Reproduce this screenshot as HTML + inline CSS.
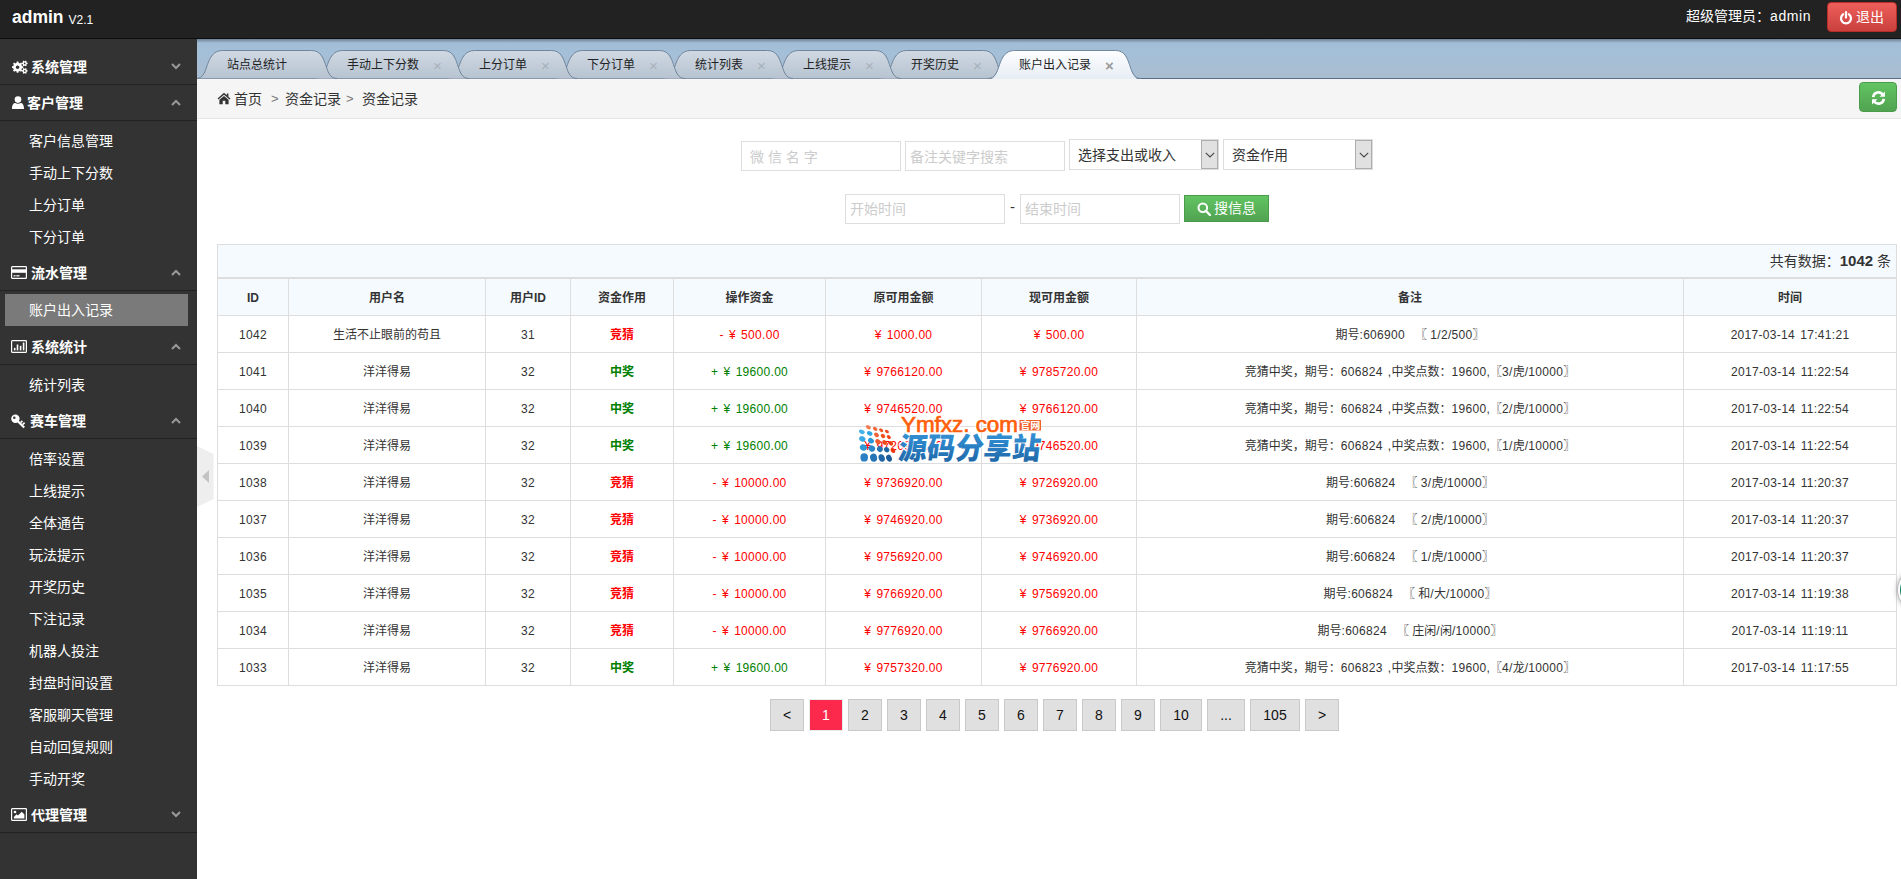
<!DOCTYPE html>
<html lang="zh-CN"><head><meta charset="utf-8"><title>admin V2.1</title><style>
*{box-sizing:border-box;margin:0;padding:0}
html,body{width:1901px;height:879px;overflow:hidden;background:#fff}
body{font-family:"Liberation Sans", "Noto Sans CJK SC", sans-serif;font-size:14px;color:#333;position:relative}
.abs{position:absolute}
#hd{position:absolute;left:0;top:0;width:1901px;height:39px;background:#222;border-bottom:1px solid #0d0d0d}
#logo{position:absolute;left:12px;top:5px;color:#fff;font-weight:bold;font-size:17.5px;line-height:24px;white-space:nowrap}
#logo span{font-weight:normal;font-size:12px;margin-left:5px;position:relative;top:1px}
#user{position:absolute;left:1686px;top:5px;color:#fff;font-size:14px;line-height:22px;white-space:nowrap}
#logout{position:absolute;left:1827px;top:2px;width:70px;height:30px;border-radius:4px;border:1px solid #b92c28;background:linear-gradient(#ee5f5b,#c9403c);color:#fff;font-size:14px;line-height:28px;white-space:nowrap}
#logout svg{position:absolute;left:11px;top:8px}
#logout span{position:absolute;left:28px;top:0}
#side{position:absolute;left:0;top:39px;width:197px;height:840px;background:#333}
.gh{position:absolute;left:0;width:197px;height:36px;border-bottom:1px solid #222;color:#fff;font-weight:bold;font-size:14px;line-height:35px;white-space:nowrap}
.gh .t{position:absolute;top:1px}
.gh svg.ic{position:absolute;left:12px;top:11px}
.gh svg.ic2{position:absolute;left:11px;top:11px}
.gh svg.ch{position:absolute;left:171px;top:14px}
.it{position:absolute;left:29px;height:32px;line-height:32px;color:#fff;font-size:14px;white-space:nowrap}
#act{position:absolute;left:5px;top:255px;width:183px;height:32px;background:#7a7a7a}
#tabs{position:absolute;left:197px;top:39px;width:1704px;height:40px;background:linear-gradient(#6f8193 0,#a2bed7 4px,#a4bfd8 14px,#aabdd0 39px)}
#tabs svg{position:absolute;left:0;top:0}
.tt{position:absolute;top:17px;height:18px;line-height:18px;font-size:12px;color:#222;white-space:nowrap}
.tx{position:absolute;top:18px;height:18px;line-height:18px;font-size:15px;color:#aaa;font-weight:bold}
#bc{position:absolute;left:197px;top:79px;width:1704px;height:40px;background:#f5f5f5;border-bottom:1px solid #e5e5e5;font-size:14px;color:#333;line-height:40px;white-space:nowrap}
#bc span{position:absolute;top:0}
#bc svg{position:absolute;left:20px;top:13px}
#refresh{position:absolute;left:1859px;top:82px;width:38px;height:30px;border-radius:4px;border:1px solid #4a9c4a;background:linear-gradient(#62c462,#51a351)}
#refresh svg{position:absolute;left:11px;top:8px}
.inp{position:absolute;height:30px;border:1px solid #ddd;background:#fff;font-size:14px;color:#ccc;line-height:28px;padding-left:6px;white-space:nowrap;overflow:hidden}
.sel{position:absolute;height:31px;border:1px solid #ddd;background:#fff;font-size:14px;color:#333;line-height:30px;padding-left:8px;white-space:nowrap}
.sel i{position:absolute;right:0;top:0;width:17px;height:29px;background:#e1e1e1;border:1px solid #adadad;display:block}
.sel i svg{position:absolute;left:2.5px;top:11px}
#sbtn{position:absolute;left:1184px;top:195px;width:85px;height:27px;border:1px solid #4a9c4a;background:linear-gradient(#62c462,#51a351);color:#fff;font-size:14px;line-height:25px;white-space:nowrap}
#sbtn svg{position:absolute;left:12px;top:6px}
#sbtn span{position:absolute;left:29px;top:0}
#cap{position:absolute;left:217px;top:244px;width:1680px;height:35px;border:1px solid #ddd;border-bottom:none;background:#f5fafe;font-size:14px;line-height:31px;text-align:right;padding-right:5px;color:#333;white-space:nowrap}
#cap b{font-size:15px}
#tb{position:absolute;left:217px;top:277px;width:1679px;border-collapse:collapse;table-layout:fixed;font-size:12px;color:#333}
#tb td,#tb th{border:1px solid #ddd;height:37px;line-height:16px;text-align:center;padding:2px 0 0;white-space:nowrap;overflow:hidden}
#tb th{background:#f5fafe;font-weight:bold;height:36px;border-top:2px solid #ddd}
.n{letter-spacing:.3px;word-spacing:1.6px}
#tb tr.h{height:37px}
.r{color:#f00}.g{color:#008000}
#pg a{position:absolute;top:699px;height:32px;border:1px solid #c9c9c9;background:#e0e0e0;color:#111;font-family:"Liberation Sans",sans-serif;font-size:14px;line-height:30px;text-align:center;display:block}
#pg a.on{background:#fd294d;border-color:#e4ecec;color:#fff}
#handle{position:absolute;left:197px;top:446px}
#ball{position:absolute;left:1897px;top:568px;width:44px;height:44px;border-radius:22px;border:1px solid #bdbdbd;background:#fff;box-shadow:0 0 5px rgba(0,0,0,.3)}
#ball i{position:absolute;left:2px;top:2px;width:38px;height:38px;border-radius:19px;background:#0b7d58;display:block}
#wm{position:absolute;left:859px;top:414px;width:185px;height:50px}
</style></head><body>
<div id="hd"><div id="logo">admin<span>V2.1</span></div><div id="user">超级管理员：<span style="letter-spacing:.6px">admin</span></div>
<div id="logout"><svg width="14" height="14" viewBox="0 0 14 14"><path d="M4 3.3 A5 5 0 1 0 10 3.3" fill="none" stroke="#fff" stroke-width="2.3" stroke-linecap="round"/><path d="M7 1.2 V6.6" stroke="#fff" stroke-width="2.3" stroke-linecap="round"/></svg><span>退出</span></div></div>
<div id="side"><div class="gh" style="top:10px"><svg class="ic" width="16" height="14" viewBox="0 0 16 14"><path d="M9.99 6.22 L11.23 6.31 L11.23 8.09 L9.99 8.18 L9.40 9.61 L10.21 10.55 L8.95 11.81 L8.01 11.00 L6.58 11.59 L6.49 12.83 L4.71 12.83 L4.62 11.59 L3.19 11.00 L2.25 11.81 L0.99 10.55 L1.80 9.61 L1.21 8.18 L-0.03 8.09 L-0.03 6.31 L1.21 6.22 L1.80 4.79 L0.99 3.85 L2.25 2.59 L3.19 3.40 L4.62 2.81 L4.71 1.57 L6.49 1.57 L6.58 2.81 L8.01 3.40 L8.95 2.59 L10.21 3.85 L9.40 4.79 Z M3.80 7.20 a1.80 1.80 0 1 0 3.60 0 a1.80 1.80 0 1 0 -3.60 0 Z" fill="#fff" fill-rule="evenodd"/><path d="M14.90 2.74 L15.63 2.78 L15.63 4.02 L14.90 4.06 L14.38 4.97 L14.71 5.63 L13.63 6.25 L13.23 5.64 L12.17 5.64 L11.77 6.25 L10.69 5.63 L11.02 4.97 L10.50 4.06 L9.77 4.02 L9.77 2.78 L10.50 2.74 L11.02 1.83 L10.69 1.17 L11.77 0.55 L12.17 1.16 L13.23 1.16 L13.63 0.55 L14.71 1.17 L14.38 1.83 Z M11.85 3.40 a0.85 0.85 0 1 0 1.70 0 a0.85 0.85 0 1 0 -1.70 0 Z" fill="#fff" fill-rule="evenodd"/><path d="M14.90 10.24 L15.63 10.28 L15.63 11.52 L14.90 11.56 L14.38 12.47 L14.71 13.13 L13.63 13.75 L13.23 13.14 L12.17 13.14 L11.77 13.75 L10.69 13.13 L11.02 12.47 L10.50 11.56 L9.77 11.52 L9.77 10.28 L10.50 10.24 L11.02 9.33 L10.69 8.67 L11.77 8.05 L12.17 8.66 L13.23 8.66 L13.63 8.05 L14.71 8.67 L14.38 9.33 Z M11.85 10.90 a0.85 0.85 0 1 0 1.70 0 a0.85 0.85 0 1 0 -1.70 0 Z" fill="#fff" fill-rule="evenodd"/></svg><span class="t" style="left:31px">系统管理</span><svg class="ch" width="10" height="7" viewBox="0 0 10 7"><path d="M1 1 L5 5 L9 1" fill="none" stroke="#999" stroke-width="2"/></svg></div><div class="gh" style="top:46px"><svg class="ic" width="12" height="14" viewBox="0 0 12 14"><circle cx="6" cy="3.6" r="3.3" fill="#fff"/><path d="M0 13 C0 8 2 7 3.2 7 C4.5 8 7.5 8 8.8 7 C10 7 12 8 12 13 Z" fill="#fff"/></svg><span class="t" style="left:27px">客户管理</span><svg class="ch" width="10" height="7" viewBox="0 0 10 7"><path d="M1 6 L5 2 L9 6" fill="none" stroke="#999" stroke-width="2"/></svg></div><div class="it" style="top:86px">客户信息管理</div><div class="it" style="top:118px">手动上下分数</div><div class="it" style="top:150px">上分订单</div><div class="it" style="top:182px">下分订单</div><div class="gh" style="top:216px"><svg class="ic2" width="16" height="14" viewBox="0 0 16 14"><rect x=".6" y=".6" width="14.8" height="11.8" rx=".7" fill="none" stroke="#fff" stroke-width="1.2"/><rect x=".6" y="3.3" width="14.8" height="3.5" fill="#fff"/><rect x="2.6" y="9.2" width="2" height="1.2" fill="#fff"/><rect x="5.3" y="9.2" width="3.2" height="1.2" fill="#fff"/></svg><span class="t" style="left:31px">流水管理</span><svg class="ch" width="10" height="7" viewBox="0 0 10 7"><path d="M1 6 L5 2 L9 6" fill="none" stroke="#999" stroke-width="2"/></svg></div><div id="act"></div><div class="it" style="top:255px">账户出入记录</div><div class="gh" style="top:290px"><svg class="ic2" width="16" height="14" viewBox="0 0 16 14"><rect x=".6" y=".6" width="14.8" height="11.8" rx=".7" fill="none" stroke="#fff" stroke-width="1.2"/><rect x="2.9" y="7.9" width="1.6" height="2.5" fill="#fff"/><rect x="5.7" y="4.5" width="1.6" height="5.9" fill="#fff"/><rect x="8.8" y="5.8" width="1.6" height="4.6" fill="#fff"/><rect x="11.8" y="2.5" width="1.6" height="7.9" fill="#fff"/></svg><span class="t" style="left:31px">系统统计</span><svg class="ch" width="10" height="7" viewBox="0 0 10 7"><path d="M1 6 L5 2 L9 6" fill="none" stroke="#999" stroke-width="2"/></svg></div><div class="it" style="top:330px">统计列表</div><div class="gh" style="top:364px"><svg class="ic2" width="16" height="15" viewBox="0 0 16 15"><path d="M4.4 .6 a4.2 4.2 0 1 0 0 8.4 a4.2 4.2 0 1 0 0 -8.4 Z M3.3 2.6 a1.25 1.25 0 1 1 0 2.5 a1.25 1.25 0 1 1 0 -2.5 Z" fill="#fff" fill-rule="evenodd"/><path d="M6.8 7.2 L13.2 13.6" stroke="#fff" stroke-width="2.1" fill="none"/><path d="M9.6 8.6 L11.4 6.9 M11.6 10.6 L13.6 8.7" stroke="#fff" stroke-width="1.6" fill="none"/></svg><span class="t" style="left:30px">赛车管理</span><svg class="ch" width="10" height="7" viewBox="0 0 10 7"><path d="M1 6 L5 2 L9 6" fill="none" stroke="#999" stroke-width="2"/></svg></div><div class="it" style="top:404px">倍率设置</div><div class="it" style="top:436px">上线提示</div><div class="it" style="top:468px">全体通告</div><div class="it" style="top:500px">玩法提示</div><div class="it" style="top:532px">开奖历史</div><div class="it" style="top:564px">下注记录</div><div class="it" style="top:596px">机器人投注</div><div class="it" style="top:628px">封盘时间设置</div><div class="it" style="top:660px">客服聊天管理</div><div class="it" style="top:692px">自动回复规则</div><div class="it" style="top:724px">手动开奖</div><div class="gh" style="top:758px"><svg class="ic2" width="16" height="14" viewBox="0 0 16 14"><rect x=".6" y=".6" width="14.8" height="11.8" rx=".7" fill="none" stroke="#fff" stroke-width="1.2"/><circle cx="4" cy="4" r="1.35" fill="#fff"/><path d="M2.9 10.4 V9 L5.5 6.3 L6.9 7.6 L10.8 3.7 L13.4 6.6 V10.4 Z" fill="#fff"/></svg><span class="t" style="left:31px">代理管理</span><svg class="ch" width="10" height="7" viewBox="0 0 10 7"><path d="M1 1 L5 5 L9 1" fill="none" stroke="#999" stroke-width="2"/></svg></div></div>
<div id="tabs"><svg width="1704" height="40" viewBox="0 0 1704 40"><defs><linearGradient id="ti" x1="0" y1="0" x2="0" y2="1"><stop offset="0" stop-color="#d0d9e3"/><stop offset="1" stop-color="#b7c3d1"/></linearGradient><linearGradient id="ta" x1="0" y1="0" x2="0" y2="1"><stop offset="0" stop-color="#fdfeff"/><stop offset="1" stop-color="#e6edf5"/></linearGradient></defs><rect x="0" y="39" width="1704" height="1" fill="#586e88"/><path d="M683 39.5 C690.5 39.5 692 32.5 694.5 25.5 C697 18.5 700.5 11.5 709.5 11.5 L786.5 11.5 C795.5 11.5 798 18.5 800.5 25.5 C803 32.5 804.5 39.5 812 39.5" fill="url(#ti)" stroke="#71869c" stroke-width="1"/><path d="M575 39.5 C582.5 39.5 584 32.5 586.5 25.5 C589 18.5 592.5 11.5 601.5 11.5 L678.5 11.5 C687.5 11.5 690 18.5 692.5 25.5 C695 32.5 696.5 39.5 704 39.5" fill="url(#ti)" stroke="#71869c" stroke-width="1"/><path d="M467 39.5 C474.5 39.5 476 32.5 478.5 25.5 C481 18.5 484.5 11.5 493.5 11.5 L570.5 11.5 C579.5 11.5 582 18.5 584.5 25.5 C587 32.5 588.5 39.5 596 39.5" fill="url(#ti)" stroke="#71869c" stroke-width="1"/><path d="M359 39.5 C366.5 39.5 368 32.5 370.5 25.5 C373 18.5 376.5 11.5 385.5 11.5 L462.5 11.5 C471.5 11.5 474 18.5 476.5 25.5 C479 32.5 480.5 39.5 488 39.5" fill="url(#ti)" stroke="#71869c" stroke-width="1"/><path d="M251 39.5 C258.5 39.5 260 32.5 262.5 25.5 C265 18.5 268.5 11.5 277.5 11.5 L354.5 11.5 C363.5 11.5 366 18.5 368.5 25.5 C371 32.5 372.5 39.5 380 39.5" fill="url(#ti)" stroke="#71869c" stroke-width="1"/><path d="M119 39.5 C126.5 39.5 128 32.5 130.5 25.5 C133 18.5 136.5 11.5 145.5 11.5 L246.5 11.5 C255.5 11.5 258 18.5 260.5 25.5 C263 32.5 264.5 39.5 272 39.5" fill="url(#ti)" stroke="#71869c" stroke-width="1"/><path d="M-1 39.5 C6.5 39.5 8 32.5 10.5 25.5 C13 18.5 16.5 11.5 25.5 11.5 L114.5 11.5 C123.5 11.5 126 18.5 128.5 25.5 C131 32.5 132.5 39.5 140 39.5" fill="url(#ti)" stroke="#71869c" stroke-width="1"/><path d="M791 40.5 C798.5 40.5 800 33.5 802.5 26.5 C805 18.5 808.5 11.5 817.5 11.5 L918.5 11.5 C927.5 11.5 930 18.5 932.5 26.5 C935 33.5 936.5 40.5 944 40.5 Z" fill="url(#ta)" stroke="none"/><path d="M791 39.5 C798.5 39.5 800 32.5 802.5 25.5 C805 18.5 808.5 11.5 817.5 11.5 L918.5 11.5 C927.5 11.5 930 18.5 932.5 25.5 C935 32.5 936.5 39.5 944 39.5" fill="none" stroke="#73889f" stroke-width="1"/></svg><span class="tt" style="left:30px">站点总统计</span><span class="tt" style="left:150px">手动上下分数</span><span class="tx" style="left:236px;color:#a7b0bb;font-weight:normal">×</span><span class="tt" style="left:282px">上分订单</span><span class="tx" style="left:344px;color:#a7b0bb;font-weight:normal">×</span><span class="tt" style="left:390px">下分订单</span><span class="tx" style="left:452px;color:#a7b0bb;font-weight:normal">×</span><span class="tt" style="left:498px">统计列表</span><span class="tx" style="left:560px;color:#a7b0bb;font-weight:normal">×</span><span class="tt" style="left:606px">上线提示</span><span class="tx" style="left:668px;color:#a7b0bb;font-weight:normal">×</span><span class="tt" style="left:714px">开奖历史</span><span class="tx" style="left:776px;color:#a7b0bb;font-weight:normal">×</span><span class="tt" style="left:822px">账户出入记录</span><span class="tx" style="left:908px;color:#9a9a9a;font-weight:bold">×</span></div>
<div id="bc"><svg width="14" height="13" viewBox="0 0 14 13"><path d="M7 .8 L.5 6.6 L1.4 7.6 L7 2.8 L12.6 7.6 L13.5 6.6 L11.4 4.7 V1.6 H9.8 V3.3 Z" fill="#333"/><path d="M2.4 7.8 L7 3.9 L11.6 7.8 V12.2 H8.3 V8.8 H5.7 V12.2 H2.4 Z" fill="#333"/></svg><span style="left:37px">首页</span><span style="left:74px;color:#777;font-size:13px">&gt;</span><span style="left:88px">资金记录</span><span style="left:149px;color:#777;font-size:13px">&gt;</span><span style="left:165px">资金记录</span></div>
<div id="refresh"><svg width="15" height="14" viewBox="0 0 15 14"><path d="M2.2 6.2 A5.3 5.3 0 0 1 11.8 3.6" fill="none" stroke="#fff" stroke-width="2.6"/><path d="M14 .4 V5.8 H8.6 Z" fill="#fff"/><path d="M12.8 7.8 A5.3 5.3 0 0 1 3.2 10.4" fill="none" stroke="#fff" stroke-width="2.6"/><path d="M1 13.6 V8.2 H6.4 Z" fill="#fff"/></svg></div>
<div class="inp" style="left:741px;top:141px;width:160px;padding-left:8px;line-height:30px">微 信 名 字</div>
<div class="inp" style="left:905px;top:141px;width:160px;padding-left:4px;line-height:30px">备注关键字搜索</div>
<div class="sel" style="left:1069px;top:139px;width:150px">选择支出或收入<i><svg width="10" height="6" viewBox="0 0 10 6"><path d="M.8 .9 L5 4.9 L9.2 .9" fill="none" stroke="#444" stroke-width="1.1"/></svg></i></div>
<div class="sel" style="left:1223px;top:139px;width:150px">资金作用<i><svg width="10" height="6" viewBox="0 0 10 6"><path d="M.8 .9 L5 4.9 L9.2 .9" fill="none" stroke="#444" stroke-width="1.1"/></svg></i></div>
<div class="inp" style="left:845px;top:194px;width:160px;padding-left:4px">开始时间</div>
<div class="abs" style="left:1010px;top:197px;font-size:15px;color:#333;line-height:20px">-</div>
<div class="inp" style="left:1020px;top:194px;width:160px;padding-left:4px">结束时间</div>
<div id="sbtn"><svg width="14" height="14" viewBox="0 0 14 14"><circle cx="5.8" cy="5.8" r="4.3" fill="none" stroke="#fff" stroke-width="2"/><path d="M9 9 L13 13" stroke="#fff" stroke-width="2.4" stroke-linecap="round"/></svg><span>搜信息</span></div>
<div id="cap">共有数据：<b>1042</b> 条</div>
<table id="tb"><colgroup><col style="width:71px"><col style="width:197px"><col style="width:85px"><col style="width:103px"><col style="width:152px"><col style="width:156px"><col style="width:155px"><col style="width:547px"><col style="width:213px"></colgroup><tr class="h"><th>ID</th><th>用户名</th><th>用户ID</th><th>资金作用</th><th>操作资金</th><th>原可用金额</th><th>现可用金额</th><th>备注</th><th>时间</th></tr><tr><td><span class="n">1042</span></td><td>生活不止眼前的苟且</td><td><span class="n">31</span></td><td class="r"><b>竞猜</b></td><td class="r"><span class="n">- ¥ 500.00</span></td><td class="r"><span class="n">¥ 1000.00</span></td><td class="r"><span class="n">¥ 500.00</span></td><td>期号<span class="n">:606900</span>   〖 <span class="n">1/2/500</span>〗</td><td><span class="n">2017-03-14 17:41:21</span></td></tr><tr><td><span class="n">1041</span></td><td>洋洋得易</td><td><span class="n">32</span></td><td class="g"><b>中奖</b></td><td class="g"><span class="n">+ ¥ 19600.00</span></td><td class="r"><span class="n">¥ 9766120.00</span></td><td class="r"><span class="n">¥ 9785720.00</span></td><td>竞猜中奖，期号：<span class="n">606824 ,</span>中奖点数：<span class="n">19600,</span>〖<span class="n">3/</span>虎<span class="n">/10000</span>〗</td><td><span class="n">2017-03-14 11:22:54</span></td></tr><tr><td><span class="n">1040</span></td><td>洋洋得易</td><td><span class="n">32</span></td><td class="g"><b>中奖</b></td><td class="g"><span class="n">+ ¥ 19600.00</span></td><td class="r"><span class="n">¥ 9746520.00</span></td><td class="r"><span class="n">¥ 9766120.00</span></td><td>竞猜中奖，期号：<span class="n">606824 ,</span>中奖点数：<span class="n">19600,</span>〖<span class="n">2/</span>虎<span class="n">/10000</span>〗</td><td><span class="n">2017-03-14 11:22:54</span></td></tr><tr><td><span class="n">1039</span></td><td>洋洋得易</td><td><span class="n">32</span></td><td class="g"><b>中奖</b></td><td class="g"><span class="n">+ ¥ 19600.00</span></td><td class="r"><span class="n">¥ 9726920.00</span></td><td class="r"><span class="n">¥ 9746520.00</span></td><td>竞猜中奖，期号：<span class="n">606824 ,</span>中奖点数：<span class="n">19600,</span>〖<span class="n">1/</span>虎<span class="n">/10000</span>〗</td><td><span class="n">2017-03-14 11:22:54</span></td></tr><tr><td><span class="n">1038</span></td><td>洋洋得易</td><td><span class="n">32</span></td><td class="r"><b>竞猜</b></td><td class="r"><span class="n">- ¥ 10000.00</span></td><td class="r"><span class="n">¥ 9736920.00</span></td><td class="r"><span class="n">¥ 9726920.00</span></td><td>期号<span class="n">:606824</span>   〖 <span class="n">3/</span>虎<span class="n">/10000</span>〗</td><td><span class="n">2017-03-14 11:20:37</span></td></tr><tr><td><span class="n">1037</span></td><td>洋洋得易</td><td><span class="n">32</span></td><td class="r"><b>竞猜</b></td><td class="r"><span class="n">- ¥ 10000.00</span></td><td class="r"><span class="n">¥ 9746920.00</span></td><td class="r"><span class="n">¥ 9736920.00</span></td><td>期号<span class="n">:606824</span>   〖 <span class="n">2/</span>虎<span class="n">/10000</span>〗</td><td><span class="n">2017-03-14 11:20:37</span></td></tr><tr><td><span class="n">1036</span></td><td>洋洋得易</td><td><span class="n">32</span></td><td class="r"><b>竞猜</b></td><td class="r"><span class="n">- ¥ 10000.00</span></td><td class="r"><span class="n">¥ 9756920.00</span></td><td class="r"><span class="n">¥ 9746920.00</span></td><td>期号<span class="n">:606824</span>   〖 <span class="n">1/</span>虎<span class="n">/10000</span>〗</td><td><span class="n">2017-03-14 11:20:37</span></td></tr><tr><td><span class="n">1035</span></td><td>洋洋得易</td><td><span class="n">32</span></td><td class="r"><b>竞猜</b></td><td class="r"><span class="n">- ¥ 10000.00</span></td><td class="r"><span class="n">¥ 9766920.00</span></td><td class="r"><span class="n">¥ 9756920.00</span></td><td>期号<span class="n">:606824</span>   〖 和<span class="n">/</span>大<span class="n">/10000</span>〗</td><td><span class="n">2017-03-14 11:19:38</span></td></tr><tr><td><span class="n">1034</span></td><td>洋洋得易</td><td><span class="n">32</span></td><td class="r"><b>竞猜</b></td><td class="r"><span class="n">- ¥ 10000.00</span></td><td class="r"><span class="n">¥ 9776920.00</span></td><td class="r"><span class="n">¥ 9766920.00</span></td><td>期号<span class="n">:606824</span>   〖 庄闲<span class="n">/</span>闲<span class="n">/10000</span>〗</td><td><span class="n">2017-03-14 11:19:11</span></td></tr><tr><td><span class="n">1033</span></td><td>洋洋得易</td><td><span class="n">32</span></td><td class="g"><b>中奖</b></td><td class="g"><span class="n">+ ¥ 19600.00</span></td><td class="r"><span class="n">¥ 9757320.00</span></td><td class="r"><span class="n">¥ 9776920.00</span></td><td>竞猜中奖，期号：<span class="n">606823 ,</span>中奖点数：<span class="n">19600,</span>〖<span class="n">4/</span>龙<span class="n">/10000</span>〗</td><td><span class="n">2017-03-14 11:17:55</span></td></tr></table>
<div id="pg"><a style="left:770px;width:34px">&lt;</a><a class="on" style="left:809px;width:34px">1</a><a style="left:848px;width:34px">2</a><a style="left:887px;width:34px">3</a><a style="left:926px;width:34px">4</a><a style="left:965px;width:34px">5</a><a style="left:1004px;width:34px">6</a><a style="left:1043px;width:34px">7</a><a style="left:1082px;width:34px">8</a><a style="left:1121px;width:34px">9</a><a style="left:1160px;width:42px">10</a><a style="left:1207px;width:38px">...</a><a style="left:1250px;width:50px">105</a><a style="left:1305px;width:34px">&gt;</a></div>
<div id="wm"><svg width="185" height="50" viewBox="0 0 185 50"><defs><linearGradient id="wg" x1="0" y1="0" x2="0" y2="1"><stop offset="0" stop-color="#3a9bdc"/><stop offset=".5" stop-color="#2a80c4"/><stop offset="1" stop-color="#1b5c9a"/></linearGradient></defs><ellipse cx="9.4" cy="13.3" rx="2.72" ry="1.78" fill="#f47a50" transform="rotate(35 9.4 13.3)"/><ellipse cx="16.2" cy="14.9" rx="2.51" ry="1.68" fill="#f2663a" transform="rotate(35 16.2 14.9)"/><ellipse cx="22.2" cy="16.2" rx="2.36" ry="1.57" fill="#f05526" transform="rotate(35 22.2 16.2)"/><ellipse cx="27.9" cy="17.5" rx="2.20" ry="1.41" fill="#ee4a1c" transform="rotate(35 27.9 17.5)"/><ellipse cx="2.8" cy="17.8" rx="3.04" ry="2.09" fill="#45b3ea" transform="rotate(25 2.8 17.8)"/><ellipse cx="10.7" cy="19.4" rx="2.93" ry="2.09" fill="#2ea6e4" transform="rotate(30 10.7 19.4)"/><ellipse cx="17.5" cy="20.9" rx="2.72" ry="1.99" fill="#f26238" transform="rotate(38 17.5 20.9)"/><ellipse cx="24.0" cy="22.0" rx="2.51" ry="1.88" fill="#f0501e" transform="rotate(40 24.0 22.0)"/><ellipse cx="29.8" cy="23.0" rx="2.30" ry="1.68" fill="#ee4414" transform="rotate(42 29.8 23.0)"/><ellipse cx="3.3" cy="24.8" rx="3.25" ry="2.62" fill="#3aa8e2" transform="rotate(25 3.3 24.8)"/><ellipse cx="12.0" cy="26.7" rx="3.14" ry="2.51" fill="#2a98d8" transform="rotate(35 12.0 26.7)"/><ellipse cx="19.0" cy="27.7" rx="2.93" ry="2.30" fill="#f05a2c" transform="rotate(40 19.0 27.7)"/><ellipse cx="25.6" cy="28.5" rx="2.72" ry="2.09" fill="#ee4a1a" transform="rotate(42 25.6 28.5)"/><ellipse cx="31.9" cy="29.3" rx="2.51" ry="1.88" fill="#ec3e10" transform="rotate(45 31.9 29.3)"/><ellipse cx="4.4" cy="33.5" rx="3.56" ry="3.14" fill="#3198d6" transform="rotate(20 4.4 33.5)"/><ellipse cx="12.8" cy="34.5" rx="3.35" ry="3.04" fill="#2a88c8" transform="rotate(35 12.8 34.5)"/><ellipse cx="20.9" cy="35.1" rx="3.04" ry="2.72" fill="#2474b4" transform="rotate(40 20.9 35.1)"/><ellipse cx="27.7" cy="35.8" rx="2.83" ry="2.41" fill="#1f64a4" transform="rotate(45 27.7 35.8)"/><ellipse cx="34.0" cy="36.6" rx="2.62" ry="1.99" fill="#ee3408" transform="rotate(48 34.0 36.6)"/><ellipse cx="5.2" cy="43.4" rx="3.77" ry="4.19" fill="#2a80c2" transform="rotate(0 5.2 43.4)"/><ellipse cx="14.6" cy="43.7" rx="3.46" ry="4.08" fill="#2474b6" transform="rotate(-15 14.6 43.7)"/><ellipse cx="22.7" cy="44.0" rx="3.04" ry="3.87" fill="#1f66a6" transform="rotate(-20 22.7 44.0)"/><ellipse cx="30.0" cy="44.2" rx="2.72" ry="3.66" fill="#1c5c9a" transform="rotate(-25 30.0 44.2)"/><text x="42" y="17.5" font-family='"Liberation Sans",sans-serif' font-size="21.5" fill="#fff" stroke="#fff" stroke-width="2.6" stroke-opacity=".8" textLength="117" lengthAdjust="spacingAndGlyphs">Ymfxz. com</text><text x="42" y="17.5" font-family='"Liberation Sans",sans-serif' font-size="21.5" fill="#ff5f0a" stroke="#ff5f0a" stroke-width=".7" textLength="117" lengthAdjust="spacingAndGlyphs">Ymfxz. com</text><rect x="160.5" y="6" width="21.5" height="10.5" fill="#f0622c"/><text x="161.3" y="14.8" font-family='"Noto Sans CJK SC",sans-serif' font-size="10" font-weight="bold" fill="#fff">官网</text><text x="44" y="45.5" font-family='"Noto Sans CJK SC",sans-serif' font-weight="900" font-size="30" fill="url(#wg)" stroke="#fff" stroke-width="2.5" stroke-opacity=".85" paint-order="stroke" textLength="142" lengthAdjust="spacingAndGlyphs" transform="skewX(-7)">源码分享站</text></svg></div>
<svg id="handle" width="17" height="61" viewBox="0 0 17 61"><path d="M0 0 L16.5 8 V53 L0 61 Z" fill="#eee"/><path d="M12 24 V37 L5 30.5 Z" fill="#c3c3c3"/></svg>
<div id="ball"><i></i></div>
</body></html>
